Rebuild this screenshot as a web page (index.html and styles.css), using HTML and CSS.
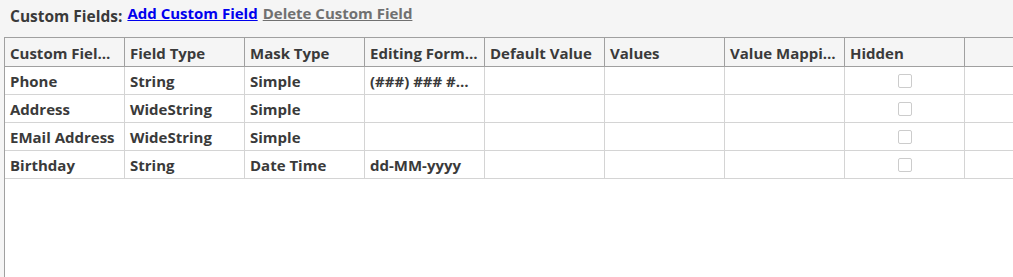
FILE: index.html
```html
<!DOCTYPE html>
<html lang="en">
<head>
    <meta charset="UTF-8">
    <title>Custom Fields</title>
    <link rel="stylesheet" href="styles.css">
</head>
<body>
    <div class="barra">
        <span class="rotulo">Custom Fields:</span>
        <a href="#" class="link-add">Add Custom Field</a>
        <a href="#" class="link-del">Delete Custom Field</a>
    </div>

    <!-- Grade de campos -->
    <div class="grade">
        <table>
            <thead>
                <tr>
                    <th>Custom Field Name</th>
                    <th>Field Type</th>
                    <th>Mask Type</th>
                    <th>Editing Format</th>
                    <th>Default Value</th>
                    <th>Values</th>
                    <th>Value Mapping</th>
                    <th>Hidden</th>
                    <th class="resto"></th>
                </tr>
            </thead>
            <tbody>
                <tr>
                    <td>Phone</td><td>String</td><td>Simple</td><td>(###) ### ####</td>
                    <td></td><td></td><td></td><td class="centro"><span class="caixa"></span></td><td class="resto"></td>
                </tr>
                <tr>
                    <td>Address</td><td>WideString</td><td>Simple</td><td></td>
                    <td></td><td></td><td></td><td class="centro"><span class="caixa"></span></td><td class="resto"></td>
                </tr>
                <tr>
                    <td>EMail Address</td><td>WideString</td><td>Simple</td><td></td>
                    <td></td><td></td><td></td><td class="centro"><span class="caixa"></span></td><td class="resto"></td>
                </tr>
                <tr>
                    <td>Birthday</td><td>String</td><td>Date Time</td><td>dd-MM-yyyy</td>
                    <td></td><td></td><td></td><td class="centro"><span class="caixa"></span></td><td class="resto"></td>
                </tr>
            </tbody>
        </table>
    </div>
</body>
</html>
```

FILE: styles.css
```css
body {
    margin: 0;
    padding: 0;
    background-color: #f5f5f5;
    color: #3a3a3a;
    font-family: "Open Sans", "Noto Sans", sans-serif;
    font-weight: 700;
    font-size: 15px;
    overflow: hidden;
    height: 277px;
}

.barra {
    display: flex;
    align-items: flex-start;
    height: 37px;
    padding-left: 10px;
    box-sizing: border-box;
}

.rotulo {
    font-size: 15.5px;
    line-height: 20px;
    margin-top: 6px;
    margin-right: 5px;
}

.barra a {
    font-size: 15px;
    line-height: 20px;
    margin-top: 3px;
    margin-right: 5px;
    text-decoration: underline;
}

.link-add {
    color: #0000ee;
}

.link-del {
    color: #707070;
}

.grade {
    margin-left: 4px;
    width: 1020px;
    height: 240px;
    background-color: #ffffff;
    border-left: 1px solid #a0a0a0;
    border-top: 1px solid #a0a0a0;
}

table {
    border-collapse: separate;
    border-spacing: 0;
    table-layout: fixed;
    width: 1020px;
}

th, td {
    width: 120px;
    height: 28px;
    padding: 0 6px 0 5px;
    box-sizing: border-box;
    text-align: left;
    white-space: nowrap;
    overflow: hidden;
    text-overflow: ellipsis;
    font-weight: 700;
    line-height: 20px;
}

th {
    background-color: #f5f5f5;
    height: 29px;
    padding-top: 2px;
    border-right: 1px solid #a0a0a0;
    border-bottom: 1px solid #a0a0a0;
}

td {
    padding-top: 1px;
    border-right: 1px solid #d4d4d4;
    border-bottom: 1px solid #d4d4d4;
}

th.resto, td.resto {
    width: auto;
    border-right: none;
}

td.centro {
    text-align: center;
    padding: 0;
}

.caixa {
    display: inline-block;
    width: 12px;
    height: 12px;
    border: 1px solid #cccccc;
    border-radius: 2px;
    background-color: #ffffff;
    vertical-align: middle;
    margin-top: -2px;
}
```
